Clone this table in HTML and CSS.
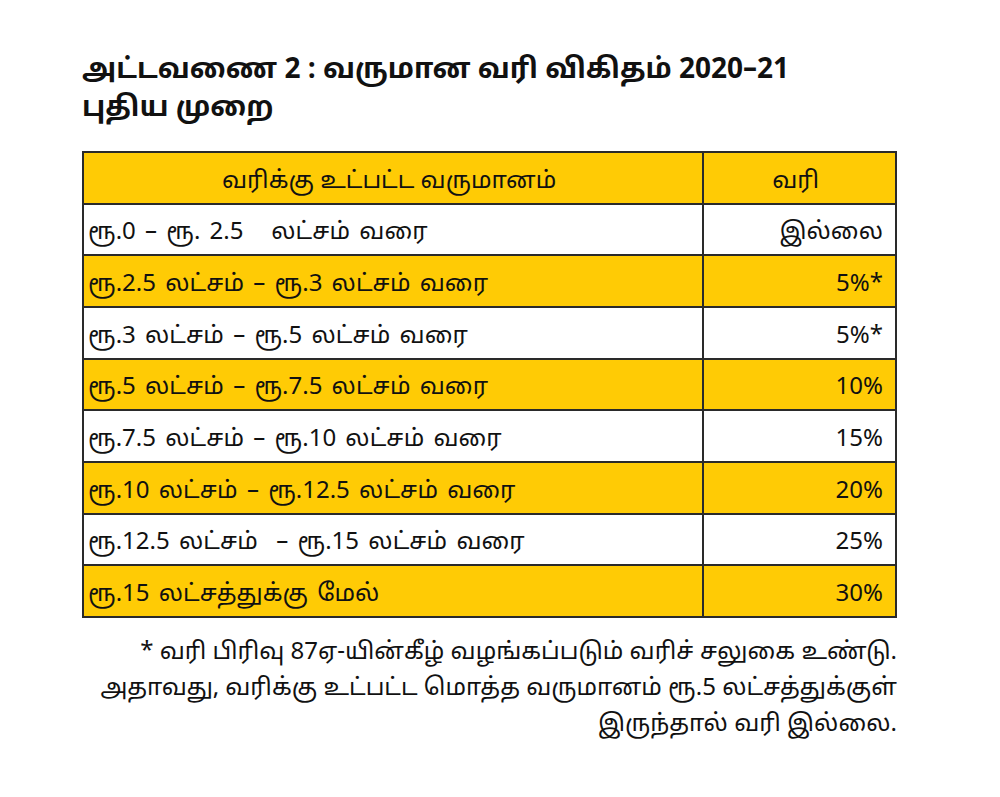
FILE: index.html
```html
<!DOCTYPE html>
<html lang="ta">
<head>
<meta charset="utf-8">
<link rel="stylesheet" href="styles.css">
</head>
<body>
<main class="page">
  <h1 class="title">அட்டவணை 2 : வருமான வரி விகிதம் 2020–21<br>புதிய முறை</h1>
  <table class="tax">
    <thead>
      <tr class="yellow"><th class="c1">வரிக்கு உட்பட்ட வருமானம்</th><th class="c2">வரி</th></tr>
    </thead>
    <tbody>
      <tr><td>ரூ.0 – ரூ. 2.5&nbsp;&nbsp; லட்சம் வரை</td><td class="r">இல்லை</td></tr>
      <tr class="yellow"><td>ரூ.2.5 லட்சம் – ரூ.3 லட்சம் வரை</td><td class="r">5%*</td></tr>
      <tr><td>ரூ.3 லட்சம் – ரூ.5 லட்சம் வரை</td><td class="r">5%*</td></tr>
      <tr class="yellow"><td>ரூ.5 லட்சம் – ரூ.7.5 லட்சம் வரை</td><td class="r">10%</td></tr>
      <tr><td>ரூ.7.5 லட்சம் – ரூ.10 லட்சம் வரை</td><td class="r">15%</td></tr>
      <tr class="yellow"><td>ரூ.10 லட்சம் – ரூ.12.5 லட்சம் வரை</td><td class="r">20%</td></tr>
      <tr><td>ரூ.12.5 லட்சம்&nbsp; – ரூ.15 லட்சம் வரை</td><td class="r">25%</td></tr>
      <tr class="yellow"><td>ரூ.15 லட்சத்துக்கு மேல்</td><td class="r">30%</td></tr>
    </tbody>
  </table>
  <p class="note">* வரி பிரிவு 87ஏ-யின்கீழ் வழங்கப்படும் வரிச் சலுகை உண்டு.<br>அதாவது, வரிக்கு உட்பட்ட மொத்த வருமானம் ரூ.5 லட்சத்துக்குள்<br>இருந்தால் வரி இல்லை.</p>
</main>
</body>
</html>
```

FILE: styles.css
```css
html, body {
  margin: 0;
  padding: 0;
  background: #ffffff;
}
body {
  font-family: "Noto Sans Tamil", "Lohit Tamil", "Latha", "Liberation Sans", Arial, sans-serif;
  color: #111111;
}
.page {
  width: 815px;
  padding: 52px 0 0 82px;
}
.title {
  margin: 0 0 23px 0;
  font-size: 28px;
  line-height: 38px;
  font-weight: bold;
  color: #111;
}
.tax {
  width: 815px;
  border-collapse: collapse;
  font-size: 24px;
}
.tax th, .tax td {
  border: 2px solid #2a2a2a;
  height: 51.67px;
  padding: 8px 12px 0 4px;
  box-sizing: border-box;
}
.tax td { word-spacing: 3px; }
.tax th {
  font-weight: normal;
  text-align: center;
}
.tax .c1 { width: 622px; }
.tax .c2 { width: 193px; }
.tax .r { text-align: right; }
.yellow { background: #ffcb05; }
.note {
  margin: 17px 0 0 0;
  text-align: right;
  font-size: 24px;
  line-height: 36px;
}
```
